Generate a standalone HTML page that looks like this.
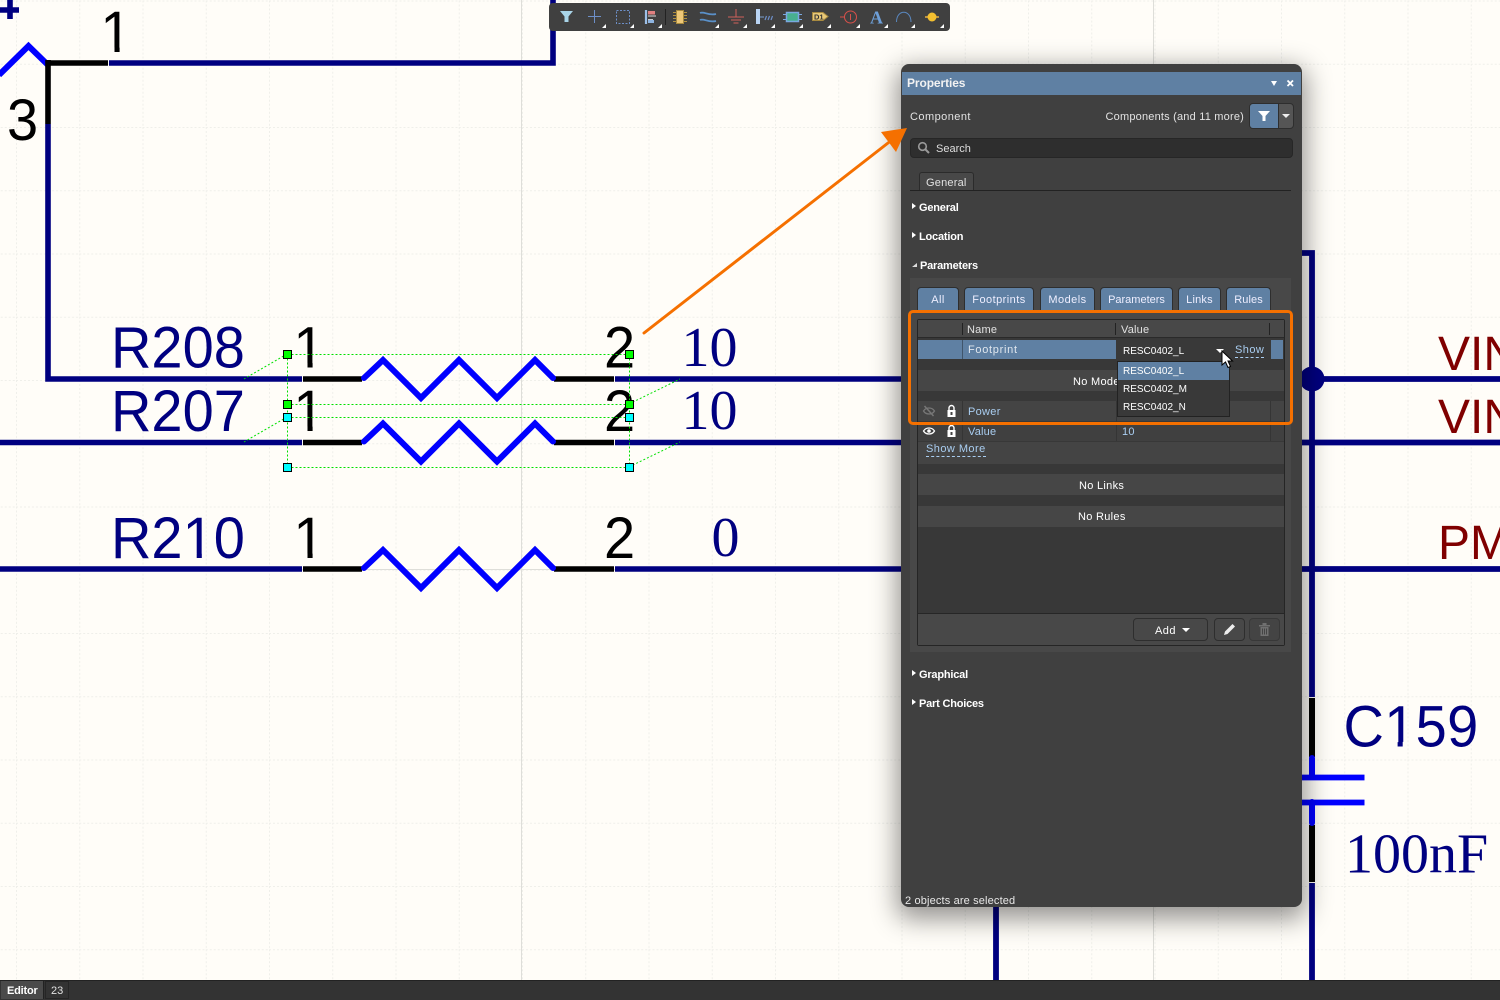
<!DOCTYPE html>
<html><head><meta charset="utf-8"><style>
html,body{margin:0;padding:0;width:1500px;height:1000px;overflow:hidden;background:#fffdf8}
#s{position:absolute;left:0;top:0}
.p{position:absolute;left:901px;top:64px;width:401px;height:843px;background:#404040;border-radius:8px;box-shadow:0 8px 26px 4px rgba(0,0,0,.42);}
.a{position:absolute;box-sizing:border-box}
.t{position:absolute;margin-top:1px;font:11px/14px "Liberation Sans",sans-serif;color:#e2e2e2;letter-spacing:.2px;white-space:nowrap}
.m{letter-spacing:.45px}
.r{font-size:10px;letter-spacing:0;color:#fff}
.b{font-weight:bold;color:#fff;letter-spacing:-.2px}
.l{color:#a9cdf0}
.tab{position:absolute;top:287px;height:24px;background:#5f80a3;border:1px solid #2e2e2e;border-bottom:0;border-radius:4px 4px 0 0;box-sizing:border-box;font:11px/24px "Liberation Sans",sans-serif;color:#eef;text-align:center;letter-spacing:.45px}
.tri{position:absolute;width:0;height:0;border-style:solid}
.bt{position:absolute;background:#484848;border:1px solid #2e2e2e;border-radius:4px;box-sizing:border-box}
</style></head><body>
<svg id="s" width="1500" height="1000" viewBox="0 0 1500 1000" xmlns="http://www.w3.org/2000/svg">
<defs><pattern id="g" x="16" y="0.5" width="63.25" height="63.25" patternUnits="userSpaceOnUse">
<path d="M0.5 0V63.25M0 0.5H63.25" stroke="#efefea" stroke-width="1" stroke-dasharray="2 2" fill="none"/></pattern>
<clipPath id="cl"><path clip-rule="evenodd" d="M0 0H1500V1000H0Z
M103.400 47.400H114.500V53H103.400ZM119.600 47.400H131V53H119.600Z
M296.400 362.900H307.500V369H296.400ZM312.600 362.900H324V369H312.600Z
M296.400 426.400H307.500V432.500H296.400ZM312.600 426.400H324V432.500H312.600Z
M296.400 553.400H307.500V559.500H296.400ZM312.600 553.400H324V559.500H312.600Z
M185.500 553.400H196.700V559.500H185.500ZM201.800 553.400H213V559.500H201.800Z
M1386.400 741.900H1397.600V748H1386.400ZM1402.700 741.900H1414V748H1402.700Z"/></clipPath></defs>
<rect width="1500" height="1000" fill="#fffdf8"/>
<rect width="1500" height="1000" fill="url(#g)"/>
<path d="M521.5 0V980M1153.5 0V980" stroke="#deded9" stroke-width="1"/>
<path d="M0 569.5H900" stroke="#deded9" stroke-width="1"/>
<g fill="none" stroke-width="5.600">
<path d="M0 10H19M10 0V19" stroke="#000080"/>
<path d="M-1 75L28.500 46L48 65" stroke="#0000ff" stroke-width="6"/>
<path d="M109 63H553V0" stroke="#000080"/>
<path d="M48 63H108M48 60V124" stroke="#000"/>
<path d="M48 124V379H302" stroke="#000080"/>
<path d="M303 379H362M554 379H614M303 442.500H362M554 442.500H614M303 569H362M554 569H614" stroke="#000"/>
<path d="M615 379H905M0 442.500H302M615 442.500H905M0 569H302M615 569H905" stroke="#000080"/>
<g stroke="#0000ff" stroke-width="6" stroke-linecap="round">
<path d="M364 378L383 360L421 398L459 360L497 398L535 360L553 378"/>
<path d="M364 441.500L383 423.500L421 461.500L459 423.500L497 461.500L535 423.500L553 441.500"/>
<path d="M364 568L383 550L421 588L459 550L497 588L535 550L553 568"/>
</g>
<path d="M1300 253H1312V697M1300 379H1500M1300 442.500H1500M1300 569H1500M1312 883V980M996 900V980" stroke="#000080" stroke-width="5.800"/>
<path d="M1312 698V757M1312 825V882" stroke="#000" stroke-width="6"/>
<path d="M1312 758V777M1312 802V823" stroke="#0000ff" stroke-width="6" stroke-linecap="round"/>
<path d="M1300 777.500H1364.500M1300 802.500H1364.500" stroke="#0000ff" stroke-width="5.800"/>
</g>
<circle cx="1312" cy="379" r="12.500" fill="#000080"/>
<g font-family="'Liberation Sans',sans-serif" font-size="56" clip-path="url(#cl)">
<text transform="translate(100.400 52) scale(1 1.040)" fill="#000">1</text>
<text transform="translate(7 140) scale(1 1.040)" fill="#000">3</text>
<text transform="translate(111 367.500) scale(1 1.040)" fill="#000080">R208</text>
<text transform="translate(111 431) scale(1 1.040)" fill="#000080">R207</text>
<text transform="translate(111 558) scale(1 1.040)" fill="#000080">R210</text>
<text transform="translate(293.400 367.500) scale(1 1.040)" fill="#000">1</text><text transform="translate(604 367.500) scale(1 1.040)" fill="#000">2</text>
<text transform="translate(293.400 431) scale(1 1.040)" fill="#000">1</text><text transform="translate(604 431) scale(1 1.040)" fill="#000">2</text>
<text transform="translate(293.400 558) scale(1 1.040)" fill="#000">1</text><text transform="translate(604 558) scale(1 1.040)" fill="#000">2</text>
<text transform="translate(1343.500 746.500) scale(1 1.040)" fill="#000080" letter-spacing=".3">C159</text>
</g>
<g font-family="'Liberation Sans',sans-serif" font-size="48" fill="#800000"><text x="1438" y="370">VIN</text><text x="1438" y="433">VIN</text><text x="1438" y="559">PM</text></g>
<g font-family="'Liberation Serif',serif" font-size="56" fill="#000080">
<text x="681.500" y="366">10</text><text x="681.500" y="429">10</text><text x="711.500" y="556">0</text>
<text x="1345" y="872.500">100nF</text></g>
<g stroke="#00e000" stroke-width="1" fill="none" stroke-dasharray="2 2">
<path d="M287.500 354.500H629.500M287.500 404.500H629.500M287.500 417.500H629.500M287.500 467.500H629.500M287.500 354.500V467.500M629.500 354.500V467.500"/>
<path d="M287 354L244 379M629 404L680 379M287 417L244 442M629 467L680 442"/>
</g>
<g stroke="#000" stroke-width="1">
<g fill="#00ff00"><rect x="283.500" y="350.500" width="8" height="8"/><rect x="625.500" y="350.500" width="8" height="8"/><rect x="283.500" y="400.500" width="8" height="8"/><rect x="625.500" y="400.500" width="8" height="8"/></g>
<g fill="#00ffff"><rect x="283.500" y="413.500" width="8" height="8"/><rect x="625.500" y="413.500" width="8" height="8"/><rect x="283.500" y="463.500" width="8" height="8"/><rect x="625.500" y="463.500" width="8" height="8"/></g>
</g>
</svg>

<!-- toolbar -->
<div class="a" style="left:549px;top:3px;width:401px;height:28px;background:#404040;border-radius:4px"></div>
<svg class="a" style="left:549px;top:3px" width="401" height="28" viewBox="549 3 401 28" fill="none">
<path d="M560 11H573L568.500 16.500V22H564.500V16.500Z" fill="#a9d4e8"/>
<path d="M594.500 10V23M588 16.500H601" stroke="#6d8fc8" stroke-width="1"/>
<rect x="616.500" y="10.500" width="13" height="13" stroke="#6d8fc8" stroke-dasharray="2 1.500"/>
<path d="M646 10V24" stroke="#9dc0e8" stroke-width="2.200"/><rect x="648" y="11" width="7" height="3.500" fill="#e08080"/><rect x="648" y="15.500" width="8" height="1" fill="#ddd"/><rect x="648" y="19" width="5" height="1" fill="#ccc"/><rect x="648" y="20" width="6" height="3" fill="#8fb4e0"/>
<path d="M665.500 9V25" stroke="#222"/>
<rect x="676.500" y="10.500" width="7" height="13" fill="#eec878" stroke="#a88a40"/><path d="M673 12.500H676M673 15.500H676M673 18.500H676M673 21.500H676M684 12.500H687M684 15.500H687M684 18.500H687M684 21.500H687" stroke="#b09040"/>
<path d="M700 13C704 11 708 16 716 14M700 20C704 18 708 23 716 21" stroke="#5a90c8" stroke-width="1.800"/>
<path d="M736 9V17M728 17H744M731 20H741M733.500 23H738.500" stroke="#d0605a" stroke-width="1"/>
<rect x="756" y="9" width="4" height="15" fill="#b9d4f4"/><path d="M760 17H764" stroke="#7aa0d0"/><path d="M765 20L766.500 16M768 20L769.500 16M771 20L772.500 16" stroke="#6d8fc8" stroke-width="1.200"/>
<rect x="786.500" y="12.500" width="12" height="9" fill="#48b090" stroke="#7aa8e0" stroke-width="1.500"/><path d="M783 14.500H786M783 19.500H786M799 14.500H802M799 19.500H802" stroke="#7aa8e0"/>
<path d="M812.500 12.500H823L828 16.500L823 20.500H812.500Z" fill="#e8c878" stroke="#a88a40"/><text x="814" y="19.500" font-family="Liberation Sans,sans-serif" font-size="7.500" font-weight="bold" fill="#333">D1</text>
<circle cx="850.500" cy="17" r="6" stroke="#d9504a" stroke-width="1"/><path d="M850.500 14V20M840 17H844.500" stroke="#d9504a" stroke-width="1"/>
<text x="870" y="23.500" font-family="Liberation Serif,serif" font-size="18" font-weight="bold" fill="#6d9fd8">A</text>
<path d="M896.500 22C896.500 9 911 9 911 22" stroke="#5a88c0" stroke-width="1"/>
<path d="M925 17H939" stroke="#e8b040" stroke-width="1.500"/><circle cx="932" cy="17" r="4.500" fill="#f4c030"/>
<g fill="#fff"><path d="M602 28H606V24ZM630 28H634V24ZM658 28H662V24ZM715 28H719V24ZM743 28H747V24ZM771 28H775V24ZM799 28H803V24ZM827 28H831V24ZM856 28H860V24ZM884 28H888V24ZM911 28H915V24ZM940 28H944V24Z"/></g>
</svg>

<!-- panel -->
<div class="p"></div>
<div class="a" style="left:902px;top:72px;width:399px;height:23px;background:#5f80a3"></div>
<div class="t b" style="left:907px;top:75px;font-size:12px;color:#f2f2f2;letter-spacing:-.1px">Properties</div>
<div class="tri" style="left:1271px;top:81px;border-width:5px 3.500px 0;border-color:#fff transparent transparent"></div>
<svg class="a" style="left:1286px;top:79px" width="9" height="9"><path d="M1.500 1.500L7 7M7 1.500L1.500 7" stroke="#fff" stroke-width="1.800"/></svg>

<div class="t m" style="left:910px;top:109px">Component</div>
<div class="t" style="right:256px;top:109px">Components (and 11 more)</div>
<div class="a" style="left:1249px;top:103px;width:45px;height:26px;border:1px solid #2e2e2e;border-radius:4px;background:#555;overflow:hidden"><div class="a" style="left:0;top:0;width:29px;height:24px;background:#5f80a3;border-right:1px solid #2e2e2e"></div></div>
<svg class="a" style="left:1257px;top:110px" width="14" height="12"><path d="M1 1H13L8.500 6V11H5.500V6Z" fill="#fff"/></svg>
<div class="tri" style="left:1282px;top:114px;border-width:4px 4px 0;border-color:#eee transparent transparent"></div>
<div class="a" style="left:910px;top:138px;width:383px;height:20px;background:#2e2e2e;border:1px solid #262626;border-radius:4px"></div>
<svg class="a" style="left:917px;top:141px" width="13" height="13" fill="none"><circle cx="5.500" cy="5.500" r="3.800" stroke="#999" stroke-width="1.600"/><path d="M8.500 8.500L12 12" stroke="#999" stroke-width="2"/></svg>
<div class="t" style="left:936px;top:141px;color:#ddd;letter-spacing:0">Search</div>
<div class="a" style="left:919px;top:172px;width:55px;height:19px;background:#484848;border:1px solid #2b2b2b;border-bottom:0;border-radius:3px 3px 0 0"></div>
<div class="t" style="left:926px;top:175px">General</div>
<div class="a" style="left:910px;top:190px;width:381px;height:1px;background:#222"></div>

<div class="tri" style="left:912px;top:203px;border-width:3.500px 0 3.500px 4px;border-color:transparent transparent transparent #fff"></div><div class="t b" style="left:919px;top:200px">General</div>
<div class="tri" style="left:912px;top:232px;border-width:3.500px 0 3.500px 4px;border-color:transparent transparent transparent #fff"></div><div class="t b" style="left:919px;top:229px">Location</div>
<div class="tri" style="left:912px;top:263px;border-width:0 0 4px 5px;border-color:transparent transparent #ddd transparent"></div><div class="t b" style="left:920px;top:258px">Parameters</div>

<div class="a" style="left:910px;top:278px;width:381px;height:374px;background:#484848"></div>
<div class="tab" style="left:917px;width:42px">All</div>
<div class="tab" style="left:964px;width:70px">Footprints</div>
<div class="tab" style="left:1040px;width:55px">Models</div>
<div class="tab" style="left:1100px;width:73px;letter-spacing:0">Parameters</div>
<div class="tab" style="left:1178px;width:43px;letter-spacing:.2px">Links</div>
<div class="tab" style="left:1226px;width:45px;letter-spacing:.1px">Rules</div>

<!-- table -->
<div class="a" style="left:917px;top:319px;width:368px;height:327px;background:#383838;border:1px solid #252525;border-radius:2px"></div>
<div class="a" style="left:918px;top:320px;width:366px;height:18px;background:#484848;border-bottom:1px solid #2a2a2a"></div>
<div class="a" style="left:962px;top:323px;width:1px;height:12px;background:#222"></div>
<div class="a" style="left:1115px;top:323px;width:1px;height:12px;background:#222"></div>
<div class="a" style="left:1269px;top:323px;width:1px;height:12px;background:#222"></div>
<div class="t" style="left:967px;top:322px">Name</div>
<div class="t" style="left:1121px;top:322px">Value</div>
<div class="a" style="left:918px;top:340px;width:365px;height:19px;background:#5f80a3"></div>
<div class="a" style="left:962px;top:340px;width:1px;height:19px;background:#40556b"></div>
<div class="a" style="left:1116px;top:339px;width:155px;height:21px;background:#393939"></div>
<div class="t" style="left:968px;top:342px;color:#dfe6ee;letter-spacing:.7px">Footprint</div>
<div class="t r" style="left:1123px;top:344px">RESC0402_L</div>
<div class="tri" style="left:1216px;top:349px;border-width:4px 4px 0;border-color:#fff transparent transparent"></div>
<div class="t l m" style="left:1235px;top:342px;border-bottom:1px dashed #a9cdf0;height:14px">Show</div>
<div class="a" style="left:918px;top:370px;width:366px;height:21px;background:#464646"></div>
<div class="t" style="left:1073px;top:374px;color:#fff;letter-spacing:.3px">No Models</div>
<div class="a" style="left:918px;top:401px;width:366px;height:20px;background:#444"></div>
<div class="a" style="left:918px;top:421px;width:366px;height:20px;background:#404040;border-top:1px solid #383838"></div>
<div class="a" style="left:918px;top:441px;width:366px;height:23px;background:#444;border-top:1px solid #383838"></div>
<div class="a" style="left:962px;top:401px;width:1px;height:40px;background:#353535"></div>
<div class="a" style="left:1116px;top:401px;width:1px;height:40px;background:#353535"></div>
<div class="a" style="left:1270px;top:401px;width:1px;height:40px;background:#353535"></div>
<svg class="a" style="left:922px;top:404px" width="14" height="14" fill="none"><path d="M1.500 7C4 3 10 3 12.500 7C10 11 4 11 1.500 7Z" stroke="#777" stroke-width="1.300"/><path d="M2.500 2L11.500 12" stroke="#777" stroke-width="1.500"/></svg>
<svg class="a" style="left:946px;top:404px" width="11" height="14" fill="none"><path d="M3 6V4A2.500 2.500 0 0 1 8 4V6" stroke="#fff" stroke-width="1.400"/><rect x="1.500" y="6" width="8" height="7" fill="#fff"/><rect x="4.500" y="8" width="2" height="3" fill="#444"/></svg>
<div class="t l" style="left:968px;top:404px;letter-spacing:.3px">Power</div>
<svg class="a" style="left:922px;top:424px" width="14" height="14" fill="none"><path d="M1.500 7C4 3 10 3 12.500 7C10 11 4 11 1.500 7Z" stroke="#fff" stroke-width="1.300"/><circle cx="7" cy="7" r="1.800" fill="#fff"/></svg>
<svg class="a" style="left:946px;top:424px" width="11" height="14" fill="none"><path d="M3 6V4A2.500 2.500 0 0 1 8 4V6" stroke="#fff" stroke-width="1.400"/><rect x="1.500" y="6" width="8" height="7" fill="#fff"/><rect x="4.500" y="8" width="2" height="3" fill="#444"/></svg>
<div class="t l" style="left:968px;top:424px">Value</div>
<div class="t l" style="left:1122px;top:424px">10</div>
<div class="t l m" style="left:926px;top:441px;border-bottom:1px dashed #a9cdf0;height:14px">Show More</div>
<div class="a" style="left:918px;top:474px;width:366px;height:21px;background:#464646"></div>
<div class="t" style="left:1079px;top:478px;color:#fff;letter-spacing:.3px">No Links</div>
<div class="a" style="left:918px;top:506px;width:366px;height:21px;background:#464646"></div>
<div class="t" style="left:1078px;top:509px;color:#fff;letter-spacing:.3px">No Rules</div>
<div class="a" style="left:918px;top:613px;width:366px;height:32px;background:#484848;border-top:1px solid #262626"></div>
<div class="bt" style="left:1133px;top:618px;width:75px;height:23px"></div>
<div class="t m" style="left:1155px;top:623px;color:#fff">Add</div>
<div class="tri" style="left:1182px;top:628px;border-width:4px 4px 0;border-color:#fff transparent transparent"></div>
<div class="bt" style="left:1214px;top:618px;width:31px;height:23px"></div>
<svg class="a" style="left:1222px;top:622px" width="15" height="15"><path d="M2 13L3 9.500L10.500 2L13 4.500L5.500 12Z" fill="#eee"/></svg>
<div class="bt" style="left:1249px;top:618px;width:31px;height:23px;border-color:#383838;background:#444"></div>
<svg class="a" style="left:1259px;top:623px" width="11" height="13" fill="#707070"><rect x="0" y="2" width="11" height="1.500"/><rect x="3.500" y="0" width="4" height="2"/><path d="M1.500 4H9.500V13H1.500ZM3 5.500V11.500H4V5.500ZM5 5.500V11.500H6V5.500ZM7 5.500V11.500H8V5.500Z" fill-rule="evenodd"/></svg>

<div class="tri" style="left:912px;top:670px;border-width:3.500px 0 3.500px 4px;border-color:transparent transparent transparent #fff"></div><div class="t b" style="left:919px;top:667px">Graphical</div>
<div class="tri" style="left:912px;top:699px;border-width:3.500px 0 3.500px 4px;border-color:transparent transparent transparent #fff"></div><div class="t b" style="left:919px;top:696px">Part Choices</div>
<div class="t" style="left:905px;top:893px;color:#e8e8e8;letter-spacing:.15px">2 objects are selected</div>

<!-- dropdown -->
<div class="a" style="left:1117px;top:361px;width:113px;height:56px;background:#393939;border:1px solid #222"></div>
<div class="a" style="left:1118px;top:362px;width:111px;height:18px;background:#5f80a3"></div>
<div class="t r" style="left:1123px;top:364px">RESC0402_L</div>
<div class="t r" style="left:1123px;top:382px">RESC0402_M</div>
<div class="t r" style="left:1123px;top:400px">RESC0402_N</div>
<svg class="a" style="left:1221px;top:350px" width="13" height="19"><path d="M1 1V15L4.500 12L7 17.500L9.500 16.500L7 11H11.500Z" fill="#fff" stroke="#000" stroke-width="1"/></svg>

<!-- annotations -->
<div class="a" style="left:908px;top:310px;width:385px;height:115px;border:3px solid #f57000;border-radius:5px"></div>
<svg class="a" style="left:630px;top:110px" width="290" height="240" viewBox="630 110 290 240" fill="none">
<path d="M644 333L888 143" stroke="#f57000" stroke-width="3" stroke-linecap="round"/>
<path d="M907 128L881 132L896 152Z" fill="#f57000"/></svg>

<!-- status -->
<div class="a" style="left:0;top:980px;width:1500px;height:20px;background:#333;border-top:1px solid #222"></div>
<div class="a" style="left:1px;top:981px;width:43px;height:18px;background:#4a4a4a;border-right:1px solid #222"></div>
<div class="t b" style="left:7px;top:983px">Editor</div>
<div class="a" style="left:45px;top:981px;width:24px;height:18px;background:#333;border:1px solid #262626"></div>
<div class="t" style="left:51px;top:983px;letter-spacing:0">23</div>
</body></html>
